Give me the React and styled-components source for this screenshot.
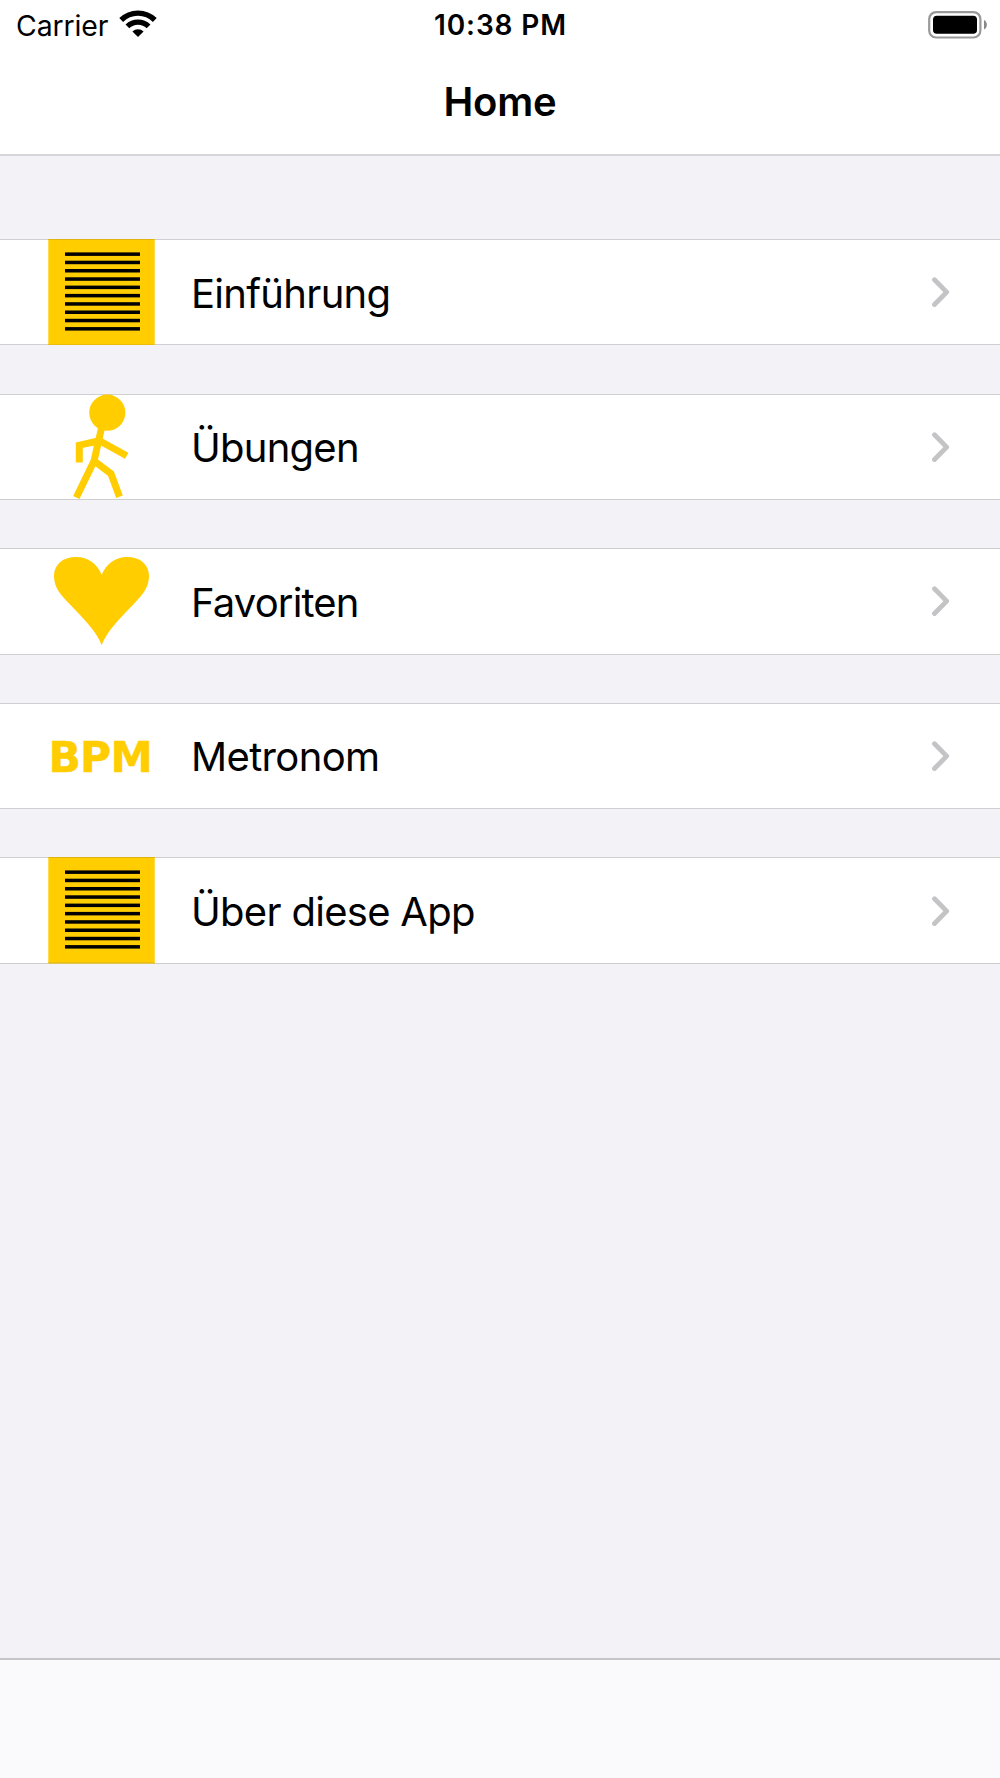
import React from 'react'
import styled, {createGlobalStyle} from 'styled-components'

const GlobalStyle = createGlobalStyle`
    body {
        margin: 0;
        background: #f2f2f7;
        color: #000;
        font-family: Inter, "Liberation Sans", sans-serif;
    }
`
const Screen = styled.div`
    display: flex;
    flex-direction: column;
    width: 1000px;
    height: 1778px;
    overflow: hidden;
    background: #f2f2f7;
`
const Header = styled.header`
    box-sizing: border-box;
    height: 156px;
    background: #fff;
    border-bottom: 2px solid #d6d6da;
`
const StatusBar = styled.div`
    display: grid;
    grid-template-columns: 1fr auto 1fr;
    align-items: center;
    height: 50px;
    padding: 0 13px 0 16px;
`
const Carrier = styled.div`
    display: flex;
    align-items: center;
    gap: 11px;
    font-size: 28.4px;
    line-height: 51px;
    letter-spacing: -0.1px;

    svg {
        margin-bottom: 3px;
    }
`
const Clock = styled.div`
    padding-right: 2px;
    font-size: 28px;
    font-weight: 600;
    line-height: 51px;
    letter-spacing: 0.9px;
`
const BatterySlot = styled.div`
    display: flex;
    justify-content: flex-end;
    padding-bottom: 2px;
`
const Title = styled.h1`
    margin: 0;
    font-size: 40px;
    font-weight: 600;
    line-height: 104px;
    letter-spacing: -0.2px;
    text-align: center;
`
const Menu = styled.main`
    display: flex;
    flex: 1;
    flex-direction: column;
    gap: 48.2px;
    padding-top: 83px;
`
const Item = styled.div`
    box-sizing: border-box;
    display: flex;
    align-items: center;
    height: 106.4px;
    padding: 0 48px;
    background: #fff;
    box-shadow: inset 0 1px #cfcfd2, inset 0 -1px #cfcfd2;
`
const Label = styled.div`
    flex: 1;
    margin-left: 36px;
    padding-top: 3px;
    font-size: 40px;
    line-height: 48px;
    letter-spacing: ${p => p.$spacing || 0}px;
`
const Icon = styled.svg`
    display: block;
    flex: none;
`
const Toolbar = styled.footer`
    box-sizing: border-box;
    height: 120px;
    background: #fafafc;
    border-top: 2px solid #c5c5c7;
`

const yellow = '#ffcd00'

const TextIcon = () => (
    <Icon width="107" height="106.4" viewBox="0 0 107 106.4">
        <rect x="0.3" width="106.4" height="106.4" fill={yellow} />
        <rect x="0.3" width="106.4" height="1" fill="#e0b512" />
        <rect x="0.3" y="105.4" width="106.4" height="1" fill="#e0b512" />
        {[...Array(10)].map((_, i) => (
            <rect key={i} x="17" y={13.4 + i * 8.3} width="75" height="3.5" />
        ))}
    </Icon>
)

const WalkIcon = () => (
    <Icon width="107" height="106.4" viewBox="0 0 107 106.4">
        <circle cx="59.3" cy="18.7" r="18.1" fill={yellow} />
        <g fill="none" stroke={yellow} strokeWidth="7">
            <path d="M54 32L46 67L28.3 103.5" />
            <path d="M45.5 66.5L63 79.8L71.5 102.8" />
            <path d="M52.5 46.5L31.3 51.2V68.5" />
            <path d="M51.5 46.7L78.7 61.8" />
        </g>
    </Icon>
)

const HeartIcon = () => (
    <Icon width="107" height="106.4" viewBox="0 0 107 106.4">
        <path
            d="M53.7 26.7C49 15.5 40 9 28.5 9C14 9 6 17 6 28C6 40 13 47 22 56.5C36 71 48 83 53.7 97C59.4 83 71 71 85.4 56.5C94 47 101 40 101 28C101 17 93 9 79 9C67.5 9 58.4 15.5 53.7 26.7Z"
            fill={yellow}
        />
    </Icon>
)

const BpmIcon = () => (
    <Icon width="107" height="106.4" viewBox="0 0 107 106.4">
        <text x="0.4" y="68.9" fill={yellow} stroke={yellow} strokeWidth="0.5" fontFamily="DejaVu Sans" fontWeight="700" fontSize="42.5" letterSpacing="-0.7">BPM</text>
    </Icon>
)

const Chevron = () => (
    <Icon width="20" height="32" viewBox="0 0 20 32">
        <path d="M2.5 3.7L14.7 16.1L2.5 28.5" fill="none" stroke="#c4c4c6" strokeWidth="4.8" strokeLinecap="round" strokeLinejoin="round" />
    </Icon>
)

const Wifi = () => (
    <Icon width="38" height="28" viewBox="0 0 38 28">
        <g fill="none" stroke="#000" strokeWidth="5.4">
            <path d="M2.2 10A24 24 0 0 1 35.8 10" />
            <path d="M8.4 16.4A15.2 15.2 0 0 1 29.6 16.4" />
        </g>
        <path d="M19 27L13.4 21.4A8.2 8.2 0 0 1 24.6 21.4Z" />
    </Icon>
)

const Battery = () => (
    <Icon width="60" height="28" viewBox="0 0 60 28">
        <rect x="2.2" y="1.1" width="51.2" height="25.4" rx="7" fill="none" stroke="#999" strokeWidth="2.2" />
        <rect x="6" y="4.8" width="44" height="18" rx="3.8" />
        <path d="M57 8.9C60.8 10.5 60.8 16.7 57 18.5Z" fill="#888" />
    </Icon>
)

const items = [
    {name: 'Einführung', icon: TextIcon, spacing: -0.7},
    {name: 'Übungen', icon: WalkIcon, spacing: -0.75},
    {name: 'Favoriten', icon: HeartIcon, spacing: -0.85},
    {name: 'Metronom', icon: BpmIcon, spacing: -0.65},
    {name: 'Über diese App', icon: TextIcon, spacing: -0.7},
]

const MenuItem = ({item}) => {
    const ItemIcon = item.icon
    return (
        <Item>
            <ItemIcon />
            <Label $spacing={item.spacing}>{item.name}</Label>
            <Chevron />
        </Item>
    )
}

const App = () => {
    return (
        <Screen>
            <GlobalStyle />
            <Header>
                <StatusBar>
                    <Carrier>Carrier <Wifi /></Carrier>
                    <Clock>10:38 PM</Clock>
                    <BatterySlot><Battery /></BatterySlot>
                </StatusBar>
                <Title>Home</Title>
            </Header>
            <Menu>
                {items.map(item => <MenuItem key={item.name} item={item} />)}
            </Menu>
            <Toolbar />
        </Screen>
    )
}

export default App
